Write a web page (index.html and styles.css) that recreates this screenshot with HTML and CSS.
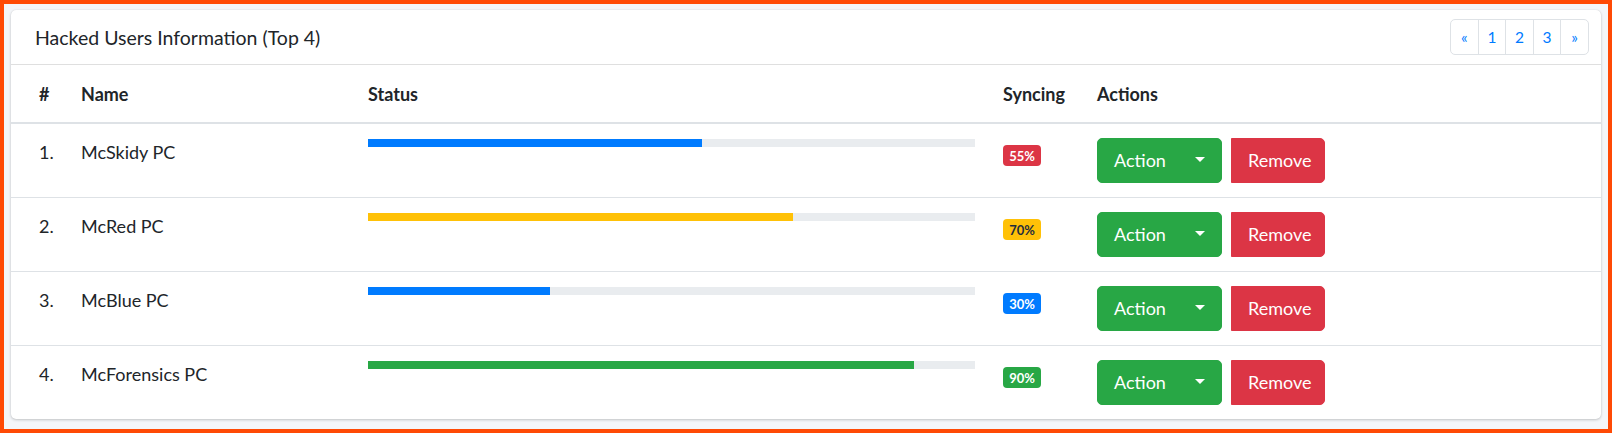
FILE: index.html
```html
<!DOCTYPE html>
<html lang="en">
<head>
<meta charset="utf-8">
<title>Hacked Users Information</title>
<link rel="stylesheet" href="styles.css">
</head>
<body>
<div class="frame">
  <div class="card">
    <div class="card-header">
      <h3 class="card-title">Hacked Users Information (Top 4)</h3>
      <ul class="pagination">
        <li><a href="#">&laquo;</a></li>
        <li><a href="#">1</a></li>
        <li><a href="#">2</a></li>
        <li><a href="#">3</a></li>
        <li><a href="#">&raquo;</a></li>
      </ul>
    </div>
    <table class="table">
      <colgroup>
        <col class="c-num"><col class="c-name"><col class="c-status"><col class="c-sync"><col class="c-act">
      </colgroup>
      <thead>
        <tr><th>#</th><th>Name</th><th>Status</th><th>Syncing</th><th>Actions</th></tr>
      </thead>
      <tbody>
        <tr>
          <td>1.</td><td>McSkidy PC</td>
          <td><div class="progress"><div class="bar bg-primary" style="width:55%"></div></div></td>
          <td><span class="badge bg-danger">55%</span></td>
          <td><div class="actions"><button class="btn btn-action">Action<span class="caret"></span></button><button class="btn btn-remove">Remove</button></div></td>
        </tr>
        <tr>
          <td>2.</td><td>McRed PC</td>
          <td><div class="progress"><div class="bar bg-warning" style="width:70%"></div></div></td>
          <td><span class="badge bg-warning">70%</span></td>
          <td><div class="actions"><button class="btn btn-action">Action<span class="caret"></span></button><button class="btn btn-remove">Remove</button></div></td>
        </tr>
        <tr>
          <td>3.</td><td>McBlue PC</td>
          <td><div class="progress"><div class="bar bg-primary" style="width:30%"></div></div></td>
          <td><span class="badge bg-primary">30%</span></td>
          <td><div class="actions"><button class="btn btn-action">Action<span class="caret"></span></button><button class="btn btn-remove">Remove</button></div></td>
        </tr>
        <tr>
          <td>4.</td><td>McForensics PC</td>
          <td><div class="progress"><div class="bar bg-success" style="width:90%"></div></div></td>
          <td><span class="badge bg-success">90%</span></td>
          <td><div class="actions"><button class="btn btn-action">Action<span class="caret"></span></button><button class="btn btn-remove">Remove</button></div></td>
        </tr>
      </tbody>
    </table>
  </div>
</div>
</body>
</html>
```

FILE: styles.css
```css
* { box-sizing: border-box; }
html, body { margin: 0; padding: 0; }
body {
  font-family: "Lato", "Source Sans Pro", "Liberation Sans", sans-serif;
  font-size: 18px;
  color: #212529;
  background: #f4f6f9;
}
.frame {
  width: 1612px;
  height: 433px;
  border: 4px solid #ff4a05;
  background: #f4f6f9;
  padding: 6px 7px 10px 7px;
}
.card {
  background: #fff;
  border-radius: 5px;
  box-shadow: 0 0 1px rgba(0,0,0,.125), 0 1px 3px rgba(0,0,0,.2);
  height: 409px;
  overflow: hidden;
}
.card-header {
  display: flex;
  align-items: flex-start;
  padding: 15px 24px 14px 24px;
  border-bottom: 1px solid rgba(0,0,0,.125);
  height: 55px;
}
.card-title {
  margin: 0;
  font-size: 19.5px;
  font-weight: 400;
  line-height: 25px;
  color: #212529;
}
.pagination {
  display: flex;
  list-style: none;
  margin: -6px -12px 0 auto;
  padding: 0;
}
.pagination li a {
  display: block;
  height: 36px;
  width: 28.6px;
  text-align: center;
  font-size: 15.5px;
  line-height: 34px;
  color: #007bff;
  text-decoration: none;
  border: 1px solid #dee2e6;
  margin-left: -1px;
  background: #fff;
}
.pagination li:first-child a { margin-left: 0; border-radius: 5px 0 0 5px; }
.pagination li:last-child a { border-radius: 0 5px 5px 0; }
.table {
  width: 100%;
  border-collapse: collapse;
  table-layout: fixed;
}
.c-num { width: 56px; }
.c-name { width: 287px; }
.c-status { width: 635px; }
.c-sync { width: 94px; }
.table th, .table td {
  padding: 14px;
  line-height: 28px;
  text-align: left;
  vertical-align: top;
}
.table th {
  font-weight: 700;
  padding-top: 15px;
  border-bottom: 2px solid #dee2e6;
}
.table th:first-child, .table td:first-child { padding-left: 28px; }
.table th:last-child, .table td:last-child { padding-right: 28px; }
.table tbody tr + tr td { border-top: 1px solid #dee2e6; }
.progress {
  height: 8px;
  background: #e9ecef;
  margin-top: 1px;
  display: flex;
}
.bar { height: 100%; }
.bg-primary { background: #007bff; color: #fff; }
.bg-warning { background: #ffc107; color: #1f2d3d; }
.bg-success { background: #28a745; color: #fff; }
.bg-danger { background: #dc3545; color: #fff; }
.badge {
  display: inline-block;
  vertical-align: top;
  margin-top: 7px;
  font-size: 13px;
  font-weight: 700;
  line-height: 14px;
  padding: 3.5px 6px;
  border-radius: 4px;
  min-width: 38px;
  text-align: center;
}
.actions {
  display: flex;
  gap: 9px;
}
.btn {
  font-family: inherit;
  font-size: 18px;
  height: 45px;
  border: 1px solid transparent;
  color: #fff;
  padding: 0 16px;
  line-height: 43px;
  display: flex;
  align-items: center;
  cursor: pointer;
}
.btn-action {
  width: 125px;
  background: #28a745;
  border-color: #28a745;
  border-radius: 5px;
}
.caret {
  margin-left: auto;
  width: 0;
  height: 0;
  border-top: 5.5px solid #fff;
  border-left: 5.5px solid transparent;
  border-right: 5.5px solid transparent;
  margin-top: -3px;
}
.btn-remove {
  width: 94px;
  background: #dc3545;
  border-color: #dc3545;
  border-radius: 0 5px 5px 0;
}
```
